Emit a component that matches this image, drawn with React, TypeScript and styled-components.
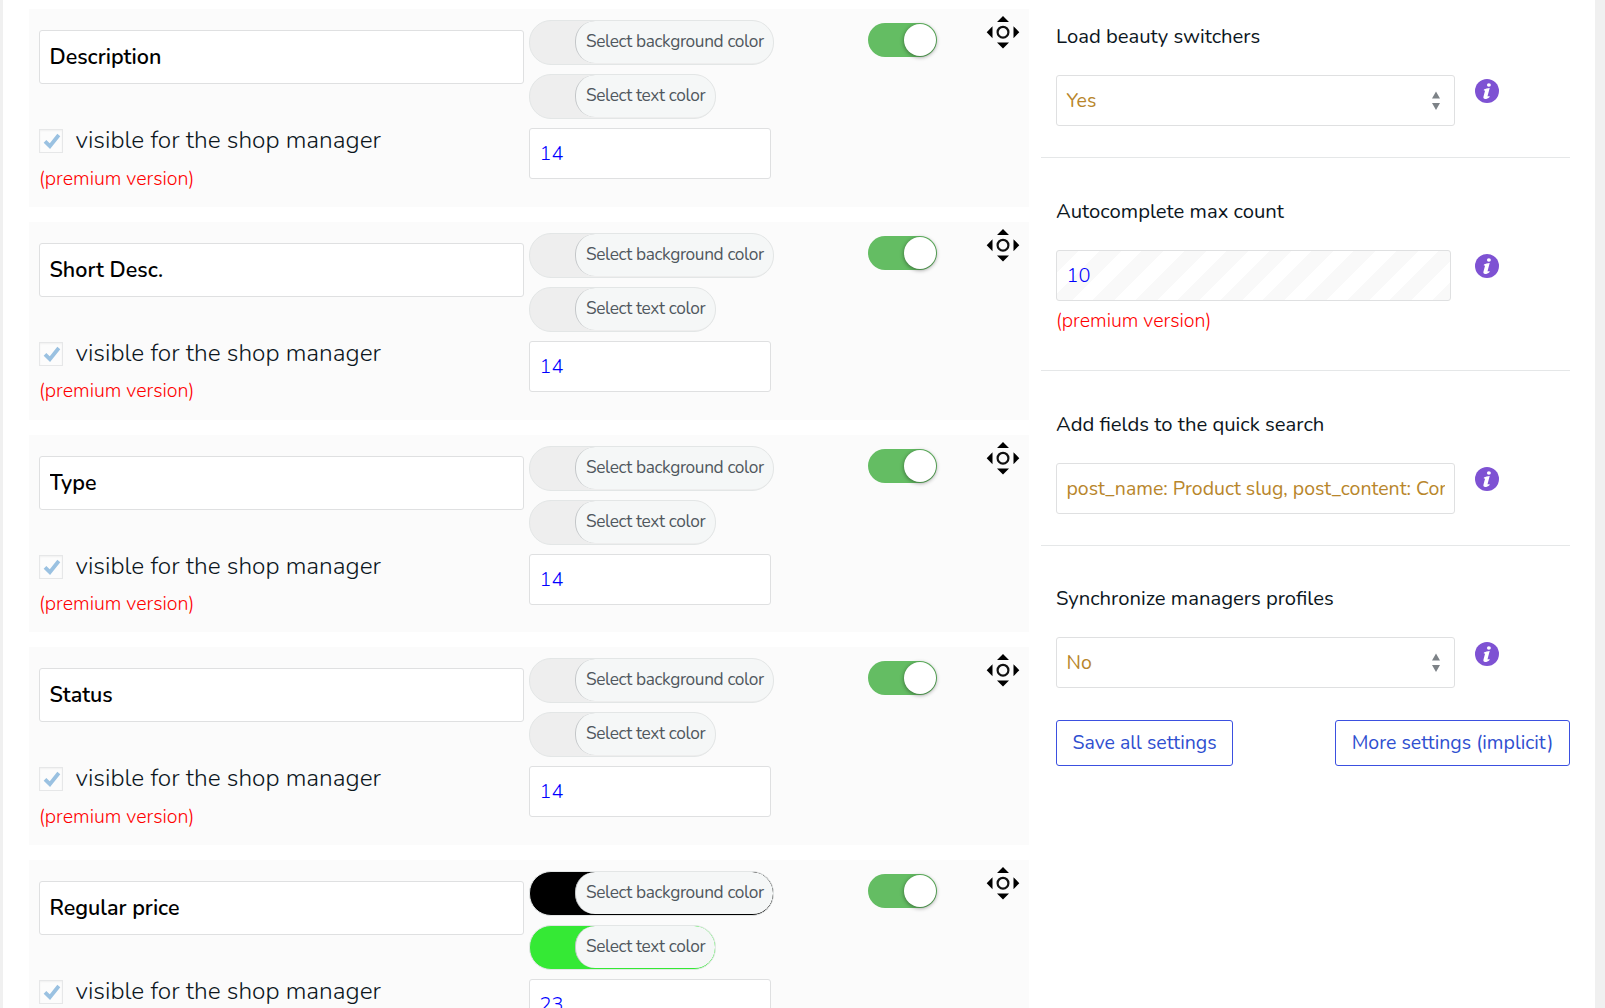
import React from 'react';
import styled, { createGlobalStyle } from 'styled-components';

const Global = createGlobalStyle`
  * { box-sizing: border-box; }
  html, body { margin: 0; height: 100%; overflow: hidden; }
  body {
    background: #f0f0f0;
    color: #0c161d;
    font-family: Nunito, Lato, "Open Sans", sans-serif;
  }
  input, button { font-family: inherit; outline: none; }
`;

const Page = styled.div`
  display: flex;
  width: 1592px;
  height: 1008px;
  margin-left: 3px;
  overflow: hidden;
  background: #fff;
`;

const FieldList = styled.main`
  display: flex;
  flex-direction: column;
  flex: none;
  gap: 15px;
  width: 1000px;
  margin-left: 26px;
  padding-top: 9px;
`;

const Card = styled.section`
  display: flex;
  flex: none;
  height: 197.75px;
  padding-left: 10px;
  background: #fbfbfb;
`;

const NameColumn = styled.div`
  width: 485px;
  padding-top: 21px;
`;

const NameInput = styled.input`
  display: block;
  width: 100%;
  height: 54px;
  padding: 0 9.5px;
  border: 1px solid #dfe0e1;
  border-radius: 3px;
  background: #fff;
  color: #000;
  font-size: 21.5px;
  font-weight: 600;
`;

const VisibleRow = styled.label`
  display: flex;
  align-items: center;
  gap: 12.5px;
  height: 24px;
  margin-top: 45px;
  font-size: 24.45px;
  font-weight: 300;
  line-height: 24px;
  white-space: nowrap;
`;

const VisibleText = styled.span`
  padding-bottom: 1.6px;
`;

const CheckBox = styled.span`
  display: flex;
  align-items: center;
  justify-content: center;
  width: 24px;
  height: 24px;
  border: 1px solid #e6e7e8;
  background: #fcfcfc;
  box-shadow: inset 0 1px 2px rgba(0, 0, 0, 0.05);
`;

const Premium = styled.div<{ $top: number }>`
  margin-top: ${(p) => p.$top}px;
  color: #f00;
  font-size: 19.6px;
  font-weight: 300;
  line-height: 26px;
`;

const StyleColumn = styled.div`
  display: flex;
  flex-direction: column;
  align-items: flex-start;
  width: 344px;
  padding: 11px 0 0 5px;
`;

const ColorPill = styled.button<{ $color: string }>`
  display: flex;
  height: 45px;
  margin: 0 0 9px;
  padding: 0 0 0 45px;
  border: 1px solid #e3e6e6;
  border-radius: 22px;
  background: ${(p) => p.$color};
  overflow: hidden;
`;

const PillLabel = styled.span`
  height: 42px;
  padding: 0 9.3px 0 10px;
  border-left: 1px solid #c3c6c8;
  border-radius: 20px;
  background: #f5f7f7;
  color: #50575e;
  font-size: 17.3px;
  font-weight: 400;
  letter-spacing: -0.37px;
  line-height: 42px;
  white-space: nowrap;
`;

const NumberInput = styled.input<{ $width: number; $striped?: boolean }>`
  display: block;
  width: ${(p) => p.$width}px;
  height: 51px;
  padding: 0 9.5px;
  border: 1px solid #dfe0e1;
  border-radius: 3px;
  background: ${(p) =>
    p.$striped
      ? 'repeating-linear-gradient(135deg, #f9f9f9 0 15.5px, #fff 15.5px 30px)'
      : '#fff'};
  color: #00f;
  font-size: 20px;
  font-weight: 300;
`;

const Switch = styled.span`
  display: flex;
  justify-content: flex-end;
  width: 69px;
  height: 34px;
  margin-top: 14px;
  padding: 1px;
  border-radius: 17px;
  background: #64bd63;
`;

const Knob = styled.span`
  width: 32px;
  height: 32px;
  border-radius: 50%;
  background: #fff;
  box-shadow: 0 1px 4px rgba(0, 0, 0, 0.45);
`;

const MoveIcon = styled.svg`
  width: 34px;
  height: 34px;
  margin: 6px 0 0 49px;
`;

const Sidebar = styled.aside`
  width: 529px;
  margin-left: 12px;
`;

const Setting = styled.section<{ $height: number; $last?: boolean }>`
  height: ${(p) => p.$height}px;
  padding: 23px 0 0 15px;
  border-bottom: ${(p) => (p.$last ? 'none' : '1px solid #e5e7e8')};
`;

const SettingTitle = styled.h5<{ $top: number }>`
  margin: ${(p) => p.$top}px 0 24px;
  font-size: 20.25px;
  font-weight: 400;
  line-height: 28px;
`;

const ControlRow = styled.div<{ $gap: number }>`
  display: flex;
  gap: ${(p) => p.$gap}px;
`;

const Select = styled.div`
  display: flex;
  align-items: center;
  justify-content: space-between;
  width: 399px;
  height: 51px;
  padding: 0 14px 0 9.5px;
  border: 1px solid #dfe0e1;
  border-radius: 3px;
  color: #b8862b;
  font-size: 19.5px;
  font-weight: 400;
`;

const TextInput = styled.input`
  width: 399px;
  height: 51px;
  padding: 0 9.5px;
  border: 1px solid #dfe0e1;
  border-radius: 3px;
  background: #fff;
  color: #b8862b;
  font-size: 19.5px;
  font-weight: 400;
`;

const InfoSvg = styled.svg<{ $top: number }>`
  width: 24px;
  height: 24px;
  margin-top: ${(p) => p.$top}px;
`;

const Actions = styled.div`
  display: flex;
  justify-content: space-between;
  margin-top: 32px;
`;

const ActionButton = styled.button<{ $width: number }>`
  width: ${(p) => p.$width}px;
  height: 46px;
  padding: 0 0 2px;
  border: 1px solid #3b50e0;
  border-radius: 3px;
  background: #fff;
  color: #2f4fd0;
  font-size: 19.5px;
  font-weight: 400;
  white-space: nowrap;
`;

const Info = ({ top = 4 }: { top?: number }) => (
  <InfoSvg $top={top} viewBox="0 0 24 24">
    <circle cx="12" cy="12" r="12" fill="#7e52d3" />
    <ellipse cx="13.9" cy="6" rx="2" ry="1.8" fill="#fff" />
    <path
      d="M8.9 10.6c1.7-.9 3.4-1.5 5.800-1.600l-2 7.600c-.3 1.100 0 1.300 1.700.5l.2.900c-1.500 1.400-3 2-4.300 2-1.700 0-2.200-1-1.800-2.500l1.400-5.300c.2-.7 0-.9-1.100-.8z"
      fill="#fff"
    />
  </InfoSvg>
);

const Arrows = () => (
  <svg width="8" height="20" viewBox="0 0 8 20">
    <path d="M4 0.5 8 7.5H0zM4 19 0 12h8z" fill="#7d8287" />
  </svg>
);

const Move = () => (
  <MoveIcon viewBox="0 0 34 34">
    <path d="M17 1 23 7H11zM17 33.5 11 27.5h12zM.7 17.2 6.5 11.2v12zM33.3 17.2 27.5 11.2v12z" fill="#000" />
    <circle cx="17" cy="17.2" r="5.4" fill="none" stroke="#111" strokeWidth="2.2" />
  </MoveIcon>
);

const fields = [
  { name: 'Description', size: '14', background: '#eee', text: '#eee' },
  { name: 'Short Desc.', size: '14', background: '#eee', text: '#eee' },
  { name: 'Type', size: '14', background: '#eee', text: '#eee' },
  { name: 'Status', size: '14', background: '#eee', text: '#eee' },
  { name: 'Regular price', size: '23', background: '#000', text: '#35e935' },
];

export default function App() {
  return (
    <>
      <Global />
      <Page>
        <FieldList>
          {fields.map((f, i) => (
            <Card key={f.name}>
              <NameColumn>
                <NameInput defaultValue={f.name} />
                <VisibleRow>
                  <CheckBox>
                    <svg width="19" height="18" viewBox="0 0 19 18">
                      <path d="M3 9.3 7.9 14.2 16.8 3" fill="none" stroke="#9ac1e1" strokeWidth="3.8" />
                    </svg>
                  </CheckBox>
                  <VisibleText>visible for the shop manager</VisibleText>
                </VisibleRow>
                {i < 4 && <Premium $top={12.7}>(premium version)</Premium>}
              </NameColumn>
              <StyleColumn>
                <ColorPill $color={f.background}>
                  <PillLabel>Select background color</PillLabel>
                </ColorPill>
                <ColorPill $color={f.text}>
                  <PillLabel>Select text color</PillLabel>
                </ColorPill>
                <NumberInput $width={242} defaultValue={f.size} />
              </StyleColumn>
              <Switch>
                <Knob />
              </Switch>
              <Move />
            </Card>
          ))}
        </FieldList>
        <Sidebar>
          <Setting $height={158}>
            <SettingTitle $top={0}>Load beauty switchers</SettingTitle>
            <ControlRow $gap={20}>
              <Select>
                Yes
                <Arrows />
              </Select>
              <Info />
            </ControlRow>
          </Setting>
          <Setting $height={213}>
            <SettingTitle $top={17}>Autocomplete max count</SettingTitle>
            <ControlRow $gap={24}>
              <NumberInput $width={395} $striped defaultValue="10" />
              <Info />
            </ControlRow>
            <Premium $top={7}>(premium version)</Premium>
          </Setting>
          <Setting $height={175}>
            <SettingTitle $top={17}>Add fields to the quick search</SettingTitle>
            <ControlRow $gap={20}>
              <TextInput defaultValue="post_name: Product slug, post_content: Content" />
              <Info />
            </ControlRow>
          </Setting>
          <Setting $height={230} $last>
            <SettingTitle $top={16}>Synchronize managers profiles</SettingTitle>
            <ControlRow $gap={20}>
              <Select>
                No
                <Arrows />
              </Select>
              <Info top={5} />
            </ControlRow>
            <Actions>
              <ActionButton $width={177}>Save all settings</ActionButton>
              <ActionButton $width={235}>More settings (implicit)</ActionButton>
            </Actions>
          </Setting>
        </Sidebar>
      </Page>
    </>
  );
}
